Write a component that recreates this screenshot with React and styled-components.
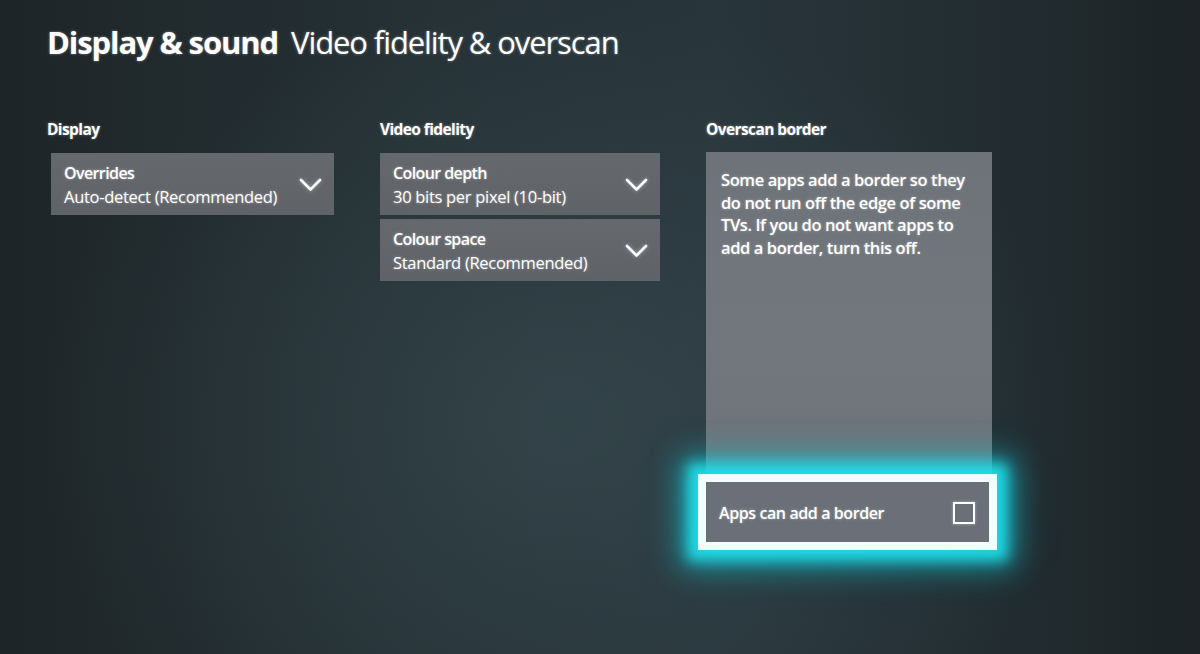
import React from 'react';
import styled, { createGlobalStyle } from 'styled-components';

const Global = createGlobalStyle`
  html, body {
    margin: 0;
    padding: 0;
    background: #232b2f;
  }
  body {
    font-family: "Open Sans", "Noto Sans", "Liberation Sans", sans-serif;
    color: #ffffff;
  }
`;

const S = {
  Screen: styled.main`
    width: 1200px;
    height: 654px;
    overflow: hidden;
    box-sizing: border-box;
    padding: 22px 0 0 47px;
    background:
      radial-gradient(ellipse 520px 420px at 560px 420px, rgba(60, 80, 86, 0.55), rgba(0, 0, 0, 0) 100%),
      linear-gradient(90deg, #1e2528 0%, #253135 35%, #28353b 60%, #222c30 85%, #1c2225 100%);
    text-shadow: 0 0 3px rgba(255, 255, 255, 0.4);
  `,
  Header: styled.h1`
    margin: 0;
    display: flex;
    align-items: baseline;
    gap: 13px;
    font-size: 31px;
    line-height: 40px;
    letter-spacing: -1.1px;
  `,
  Section: styled.span`
    font-weight: 700;
  `,
  Page: styled.span`
    font-weight: 400;
  `,
  Columns: styled.div`
    margin-top: 57px;
    display: grid;
    grid-template-columns: 287px 280px 286px;
    column-gap: 46px;
    align-items: start;
  `,
  Column: styled.section`
    display: flex;
    flex-direction: column;
  `,
  Label: styled.h2`
    margin: 0 0 ${p => p.$gap || 14}px;
    font-size: 15.5px;
    line-height: 20px;
    font-weight: 700;
    letter-spacing: -0.6px;
  `,
  Stack: styled.div`
    display: flex;
    flex-direction: column;
    gap: 4px;
    padding-left: ${p => p.$inset || 0}px;
  `,
  Dropdown: styled.button`
    all: unset;
    box-sizing: border-box;
    height: 62px;
    padding: 2px 12px 0 13px;
    display: flex;
    align-items: center;
    justify-content: space-between;
    background: linear-gradient(180deg, #65696e, #5f6368);
    color: #ffffff;
    cursor: pointer;
  `,
  DropText: styled.div`
    display: flex;
    flex-direction: column;
  `,
  DropTitle: styled.span`
    font-size: 16px;
    line-height: 24px;
    font-weight: 600;
    letter-spacing: -0.6px;
  `,
  DropValue: styled.span`
    font-size: 16.5px;
    line-height: 24px;
    font-weight: 500;
    letter-spacing: -0.3px;
  `,
  Chevron: styled.svg`
    width: 23px;
    height: 14px;
    flex: none;
    filter: drop-shadow(0 0 2px rgba(255, 255, 255, 0.4));
  `,
  Panel: styled.div`
    height: 390px;
    display: flex;
    flex-direction: column;
    justify-content: space-between;
    background: linear-gradient(180deg, #6e7379 0%, #72777d 50%, #6b7177 100%);
  `,
  Description: styled.p`
    margin: 0;
    padding: 17px 20px 0 15px;
    font-size: 16.5px;
    line-height: 22.5px;
    font-weight: 600;
    letter-spacing: -0.4px;
  `,
  Toggle: styled.label`
    box-sizing: border-box;
    height: 60px;
    margin: 0 3px 0 0;
    padding: 2px 14px 0 13px;
    display: flex;
    align-items: center;
    justify-content: space-between;
    background: #6b7078;
    outline: 7px solid #f2ffff;
    box-shadow:
      0 0 0 8px #e6ffff,
      0 0 12px 18px rgba(30, 225, 235, 0.9),
      0 0 26px 24px rgba(20, 210, 225, 0.55),
      0 0 44px 30px rgba(20, 190, 205, 0.2);
    font-size: 16px;
    font-weight: 600;
    letter-spacing: -0.4px;
    cursor: pointer;
  `,
  Box: styled.span`
    width: 18px;
    height: 18px;
    border: 2px solid #ffffff;
    box-shadow: 0 0 3px rgba(255, 255, 255, 0.4);
  `,
};

const ChevronDown = () => (
  <S.Chevron viewBox="0 0 23 14">
    <path d="M2 2 L11.5 11.5 L21 2" fill="none" stroke="#fff" strokeWidth="2.6" strokeLinecap="round" strokeLinejoin="round" />
  </S.Chevron>
);

const Dropdown = ({ title, value }) => (
  <S.Dropdown>
    <S.DropText>
      <S.DropTitle>{title}</S.DropTitle>
      <S.DropValue>{value}</S.DropValue>
    </S.DropText>
    <ChevronDown />
  </S.Dropdown>
);

const App = () => {
  return (
    <>
      <Global />
      <S.Screen>
        <S.Header>
          <S.Section>Display &amp; sound</S.Section>
          <S.Page>Video fidelity &amp; overscan</S.Page>
        </S.Header>
        <S.Columns>
          <S.Column>
            <S.Label>Display</S.Label>
            <S.Stack $inset={4}>
              <Dropdown title="Overrides" value="Auto-detect (Recommended)" />
            </S.Stack>
          </S.Column>
          <S.Column>
            <S.Label>Video fidelity</S.Label>
            <S.Stack>
              <Dropdown title="Colour depth" value="30 bits per pixel (10-bit)" />
              <Dropdown title="Colour space" value="Standard (Recommended)" />
            </S.Stack>
          </S.Column>
          <S.Column>
            <S.Label $gap={13}>Overscan border</S.Label>
            <S.Panel>
              <S.Description>
                Some apps add a border so they do not run off the edge of some TVs. If you do not want apps to add a border, turn this off.
              </S.Description>
              <S.Toggle>
                Apps can add a border
                <S.Box />
              </S.Toggle>
            </S.Panel>
          </S.Column>
        </S.Columns>
      </S.Screen>
    </>
  );
};

export default App;
